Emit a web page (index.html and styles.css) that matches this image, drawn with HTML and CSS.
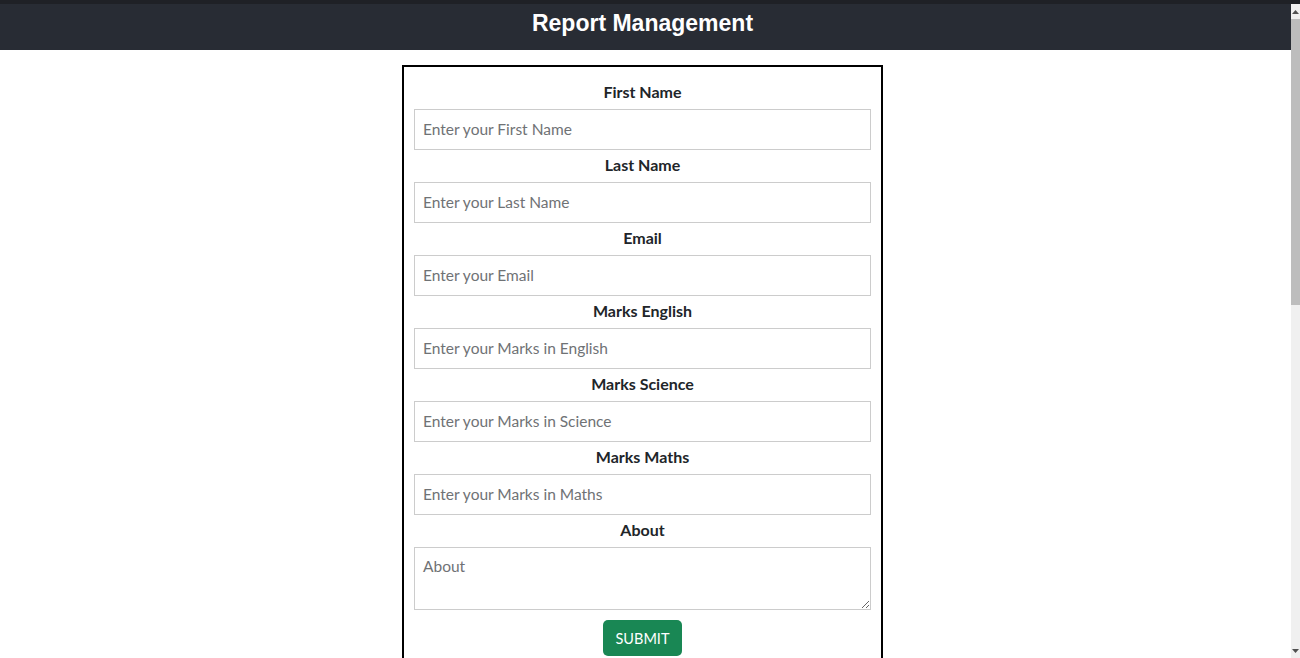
FILE: index.html
```html
<!DOCTYPE html>
<html lang="en">
<head>
<meta charset="utf-8">
<title>Report Management</title>
<link rel="stylesheet" href="styles.css">
</head>
<body>
<div class="chrome-strip"></div>
<div class="frame">
  <div class="viewport">
    <header class="app-header">
      <h1 class="app-title">Report Management</h1>
    </header>
    <main class="main">
      <form class="report-form">
        <label class="field-label" for="fn">First Name</label>
        <input class="field-input" id="fn" type="text" placeholder="Enter your First Name">
        <label class="field-label" for="ln">Last Name</label>
        <input class="field-input" id="ln" type="text" placeholder="Enter your Last Name">
        <label class="field-label" for="em">Email</label>
        <input class="field-input" id="em" type="text" placeholder="Enter your Email">
        <label class="field-label" for="me">Marks English</label>
        <input class="field-input" id="me" type="text" placeholder="Enter your Marks in English">
        <label class="field-label" for="ms">Marks Science</label>
        <input class="field-input" id="ms" type="text" placeholder="Enter your Marks in Science">
        <label class="field-label" for="mm">Marks Maths</label>
        <input class="field-input" id="mm" type="text" placeholder="Enter your Marks in Maths">
        <label class="field-label" for="ab">About</label>
        <textarea class="field-input field-area" id="ab" placeholder="About"></textarea>
        <div class="actions">
          <button class="submit-btn" type="button">SUBMIT</button>
        </div>
      </form>
    </main>
  </div>
  <div class="scrollbar" aria-hidden="true">
    <div class="sb-button">
      <svg width="7" height="4" viewBox="0 0 7 4"><polygon points="0,4 7,4 3.5,0" fill="#505050"/></svg>
    </div>
    <div class="sb-track">
      <div class="sb-thumb"></div>
    </div>
    <div class="sb-button">
      <svg width="7" height="4" viewBox="0 0 7 4"><polygon points="0,0 7,0 3.5,4" fill="#505050"/></svg>
    </div>
  </div>
</div>
</body>
</html>
```
FILE: styles.css
```css
html, body {
  margin: 0;
  padding: 0;
  height: 100%;
  overflow: hidden;
}

body {
  display: flex;
  flex-direction: column;
  font-family: "Lato", "Open Sans", sans-serif;
  color: #212529;
  background: #ffffff;
}

.chrome-strip {
  flex: 0 0 4px;
  background: #1f2126;
}

.frame {
  flex: 1 1 auto;
  display: flex;
  min-height: 0;
}

.viewport {
  flex: 1 1 auto;
  overflow: hidden;
  min-width: 0;
}

.scrollbar {
  flex: 0 0 9px;
  display: flex;
  flex-direction: column;
  background: #f0f0f0;
}

.sb-button {
  height: 15px;
  display: flex;
  align-items: center;
  justify-content: center;
}

.sb-track {
  flex: 1 1 auto;
}

.sb-thumb {
  height: 286px;
  background: #bdbdbd;
}

.app-header {
  background: #282c34;
  height: 46px;
  box-sizing: border-box;
  padding: 6px 6px 0 0;
}

.app-title {
  margin: 0;
  text-align: center;
  font-family: "Liberation Sans", Arial, sans-serif;
  font-weight: bold;
  font-size: 23px;
  line-height: normal;
  color: #ffffff;
}

.main {
  padding: 15px 6px 0 0;
}

.report-form {
  width: 481px;
  box-sizing: border-box;
  margin: 0 auto;
  border: 2px solid #000000;
  padding: 10px 10px 40px 10px;
  display: flex;
  flex-direction: column;
}

.field-label {
  display: block;
  text-align: center;
  font-weight: bold;
  font-size: 16px;
  line-height: 24px;
  margin: 3px 0 5px 0;
  color: #212529;
}

.field-input {
  display: block;
  width: 100%;
  height: 41px;
  box-sizing: border-box;
  margin: 0;
  padding: 7px 8px 9px 8px;
  border: 1px solid #cccccc;
  border-radius: 0;
  font-family: "Lato", "Open Sans", sans-serif;
  font-size: 15.5px;
  color: #212529;
  background: #ffffff;
  outline: none;
}

.field-input::placeholder {
  color: #6f7275;
  opacity: 1;
}

.field-area {
  height: 63px;
  resize: vertical;
  padding-top: 9px;
}

.actions {
  display: flex;
  justify-content: center;
  margin-top: 10px;
}

.submit-btn {
  width: 79px;
  height: 36px;
  box-sizing: border-box;
  border: none;
  border-radius: 5px;
  background: #198754;
  color: #ffffff;
  font-family: "Lato", "Open Sans", sans-serif;
  font-size: 14.5px;
  padding: 0;
}
```
